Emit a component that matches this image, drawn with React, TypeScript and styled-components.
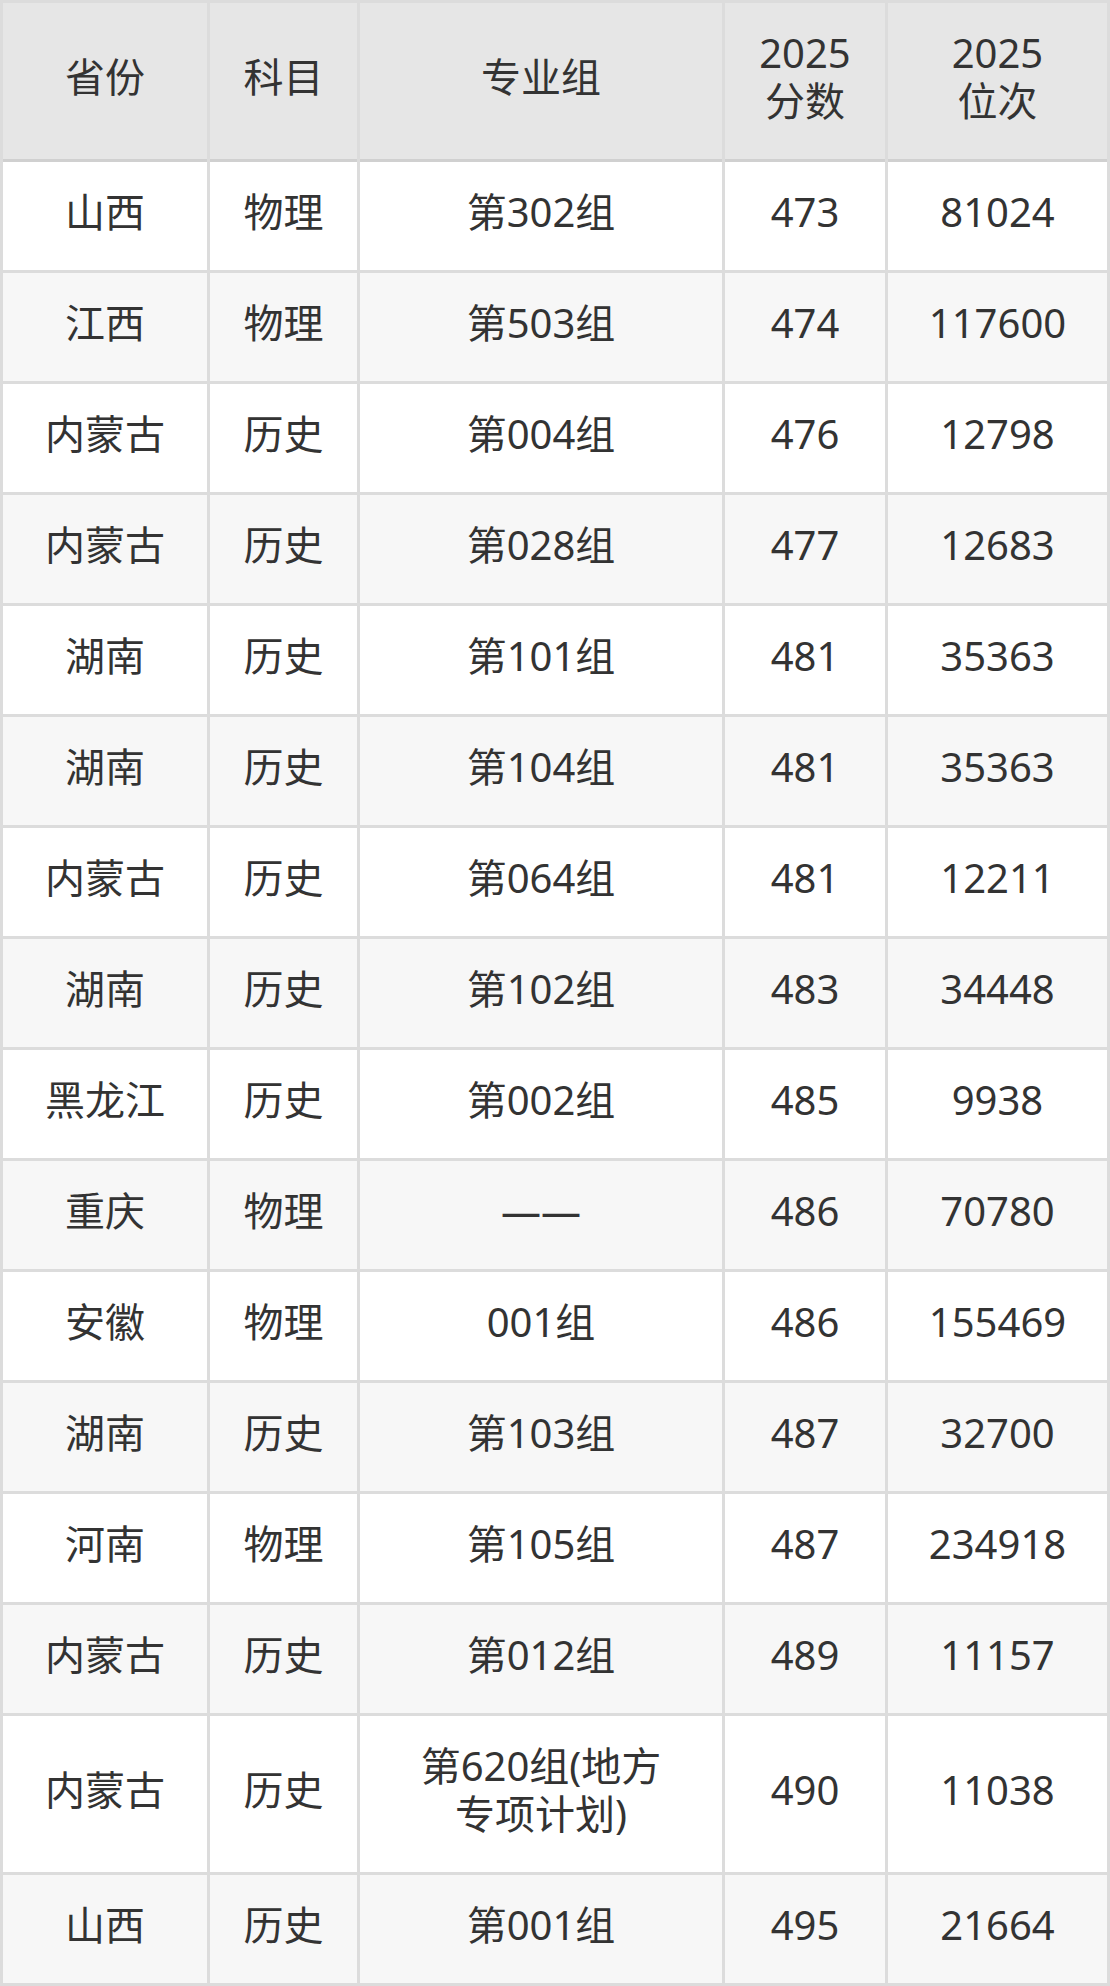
import React from "react";
import styled, { createGlobalStyle } from "styled-components";

const GlobalStyle = createGlobalStyle`
	html, body {
		margin: 0;
		padding: 0;
		background: #ffffff;
	}
	body {
		font-family: "Noto Sans", "Noto Sans CJK SC", sans-serif;
	}
`;

interface ScoreRow {
	province: string;
	subject: string;
	group: string;
	score: number;
	rank: number;
}

// 2025 各省投档分数与位次
const rows: ScoreRow[] = [
	{ province: "山西", subject: "物理", group: "第302组", score: 473, rank: 81024 },
	{ province: "江西", subject: "物理", group: "第503组", score: 474, rank: 117600 },
	{ province: "内蒙古", subject: "历史", group: "第004组", score: 476, rank: 12798 },
	{ province: "内蒙古", subject: "历史", group: "第028组", score: 477, rank: 12683 },
	{ province: "湖南", subject: "历史", group: "第101组", score: 481, rank: 35363 },
	{ province: "湖南", subject: "历史", group: "第104组", score: 481, rank: 35363 },
	{ province: "内蒙古", subject: "历史", group: "第064组", score: 481, rank: 12211 },
	{ province: "湖南", subject: "历史", group: "第102组", score: 483, rank: 34448 },
	{ province: "黑龙江", subject: "历史", group: "第002组", score: 485, rank: 9938 },
	{ province: "重庆", subject: "物理", group: "——", score: 486, rank: 70780 },
	{ province: "安徽", subject: "物理", group: "001组", score: 486, rank: 155469 },
	{ province: "湖南", subject: "历史", group: "第103组", score: 487, rank: 32700 },
	{ province: "河南", subject: "物理", group: "第105组", score: 487, rank: 234918 },
	{ province: "内蒙古", subject: "历史", group: "第012组", score: 489, rank: 11157 },
	{ province: "内蒙古", subject: "历史", group: "第620组(地方专项计划)", score: 490, rank: 11038 },
	{ province: "山西", subject: "历史", group: "第001组", score: 495, rank: 21664 },
];

const colWidths = [204, 147, 362, 160, 219];

const Table = styled.table`
	width: 1110px;
	table-layout: fixed;
	border-collapse: separate;
	border-spacing: 3px;
	background: #dcdcdc;
	color: #333333;
	font-size: 40px;
	line-height: 48px;
`;

const HeadCell = styled.th`
	background: #e6e6e6;
	font-weight: 400;
	text-align: center;
	vertical-align: middle;
	padding: 26px 8px 34px;
	box-shadow: 0 3px 0 #d0d0d0;
`;

const Row = styled.tr`
	background: #ffffff;

	&:nth-child(even) {
		background: #f7f7f7;
	}
`;

const Cell = styled.td<{ $wide?: boolean }>`
	text-align: center;
	vertical-align: middle;
	padding: ${p => (p.$wide ? "26px 50px 34px" : "26px 6px 34px")};
	white-space: ${p => (p.$wide ? "normal" : "nowrap")};
`;

export default function App() {
	return (
		<>
			<GlobalStyle />
			<Table>
				<colgroup>
					{colWidths.map((w, i) => (
						<col key={i} style={{ width: w }} />
					))}
				</colgroup>
				<thead>
					<tr>
						<HeadCell>省份</HeadCell>
						<HeadCell>科目</HeadCell>
						<HeadCell>专业组</HeadCell>
						<HeadCell>2025<br />分数</HeadCell>
						<HeadCell>2025<br />位次</HeadCell>
					</tr>
				</thead>
				<tbody>
					{rows.map((r, i) => (
						<Row key={i}>
							<Cell>{r.province}</Cell>
							<Cell>{r.subject}</Cell>
							<Cell $wide>{r.group}</Cell>
							<Cell>{r.score}</Cell>
							<Cell>{r.rank}</Cell>
						</Row>
					))}
				</tbody>
			</Table>
		</>
	);
}
